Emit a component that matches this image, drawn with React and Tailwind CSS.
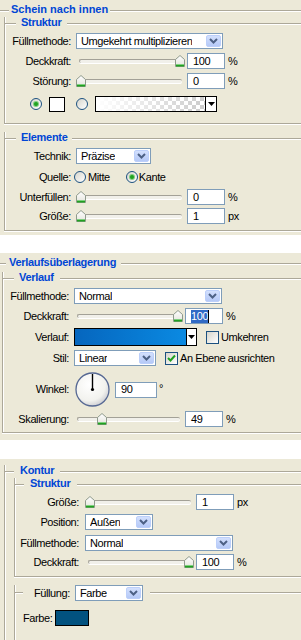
import React from "react";

const Line = ({ className = "" }) => (
  <div className={`h-[2px] border-t border-[#aca899] bg-white ${className}`} />
);

const Header = ({ title, lead, pad, className = "" }) => (
  <div className={`flex items-center h-[14px] ${className}`}>
    <Line className={`shrink-0 ${lead}`} />
    <span
      className={`shrink-0 leading-[13px] pb-[3px] font-bold text-[#0046d5] tracking-[-0.3px] whitespace-nowrap ${pad}`}
    >
      {title}
    </span>
    <Line className="flex-1" />
  </div>
);

const Box = ({ className = "", children }) => (
  <div
    className={`border-l border-b border-[#aca899] shadow-[inset_1px_0_0_#fff,0_1px_0_#fff] ${className}`}
  >
    {children}
  </div>
);

const Chevron = () => (
  <svg width="9" height="6" viewBox="0 0 9 6">
    <path d="M1 1 L4.5 4.5 L8 1" fill="none" stroke="#4d6185" strokeWidth="2" />
  </svg>
);

const Select = ({ value, w }) => (
  <div
    className={`${w} h-[16px] shrink-0 bg-white border border-[#7f9db9] flex items-center justify-between pl-[4px] pr-[1px]`}
  >
    <span className="leading-[13px] whitespace-nowrap overflow-hidden">{value}</span>
    <div className="w-[15px] h-[12px] shrink-0 rounded-[2px] border border-[#bccffa] bg-gradient-to-b from-[#d3e0fd] to-[#b5c9f7] flex items-center justify-center">
      <Chevron />
    </div>
  </div>
);

const Field = ({ value, w = "w-[38px]", children }) => (
  <div
    className={`${w} h-[16px] shrink-0 bg-white border border-[#7f9db9] flex items-center pl-[5px] leading-[13px]`}
  >
    {children || value}
  </div>
);

const Thumb = () => (
  <svg width="10" height="12" viewBox="0 0 10 12">
    <defs>
      <linearGradient id="tg" x1="0" y1="0" x2="0" y2="1">
        <stop offset="0" stopColor="#ffffff" />
        <stop offset="1" stopColor="#e4e4dc" />
      </linearGradient>
    </defs>
    <path d="M0.5 4.5 L5 0.5 L9.5 4.5 L9.5 11.5 L0.5 11.5 Z" fill="url(#tg)" stroke="#8f9a8c" />
    <rect x="1" y="9.5" width="8" height="2" fill="#21a121" />
    <rect x="1" y="9" width="8" height="1" fill="#7fcf7f" />
  </svg>
);

const Slider = ({ pos }) => (
  <div className="relative w-[111px] h-[16px] shrink-0">
    <div className="absolute left-[3px] right-[5px] top-[6px] h-[4px] rounded-[2px] border-t border-l border-[#a3a197] bg-[#f1f0ea] shadow-[0_1px_0_#fff]" />
    <div className="absolute top-[2px] flex" style={{ left: pos }}>
      <Thumb />
    </div>
  </div>
);

const Radio = ({ on, className = "" }) => (
  <div
    className={`w-[12px] h-[12px] shrink-0 rounded-full border border-[#1c5180] bg-gradient-to-br from-[#d6d5cc] to-white flex items-center justify-center ${className}`}
  >
    {on && <div className="w-[4px] h-[4px] rounded-full bg-[#21a121] shadow-[0_0_0_1px_#7fcf7f]" />}
  </div>
);

const Check = ({ on, className = "" }) => (
  <div
    className={`w-[13px] h-[13px] shrink-0 border border-[#1c5180] bg-gradient-to-br from-[#d6d5cc] to-white flex items-center justify-center ${className}`}
  >
    {on && (
      <svg width="9" height="9" viewBox="0 0 9 9">
        <path d="M1 4 L3.5 6.5 L8 1.5" fill="none" stroke="#21a121" strokeWidth="2" />
      </svg>
    )}
  </div>
);

const Label = ({ w, children }) => (
  <div className={`${w} shrink-0 text-right leading-[13px] whitespace-nowrap`}>{children}</div>
);

const Row = ({ label, lw, className = "", h = "h-[16px]", children }) => (
  <div className={`flex items-center ${h} ${className}`}>
    <Label w={lw}>{label}</Label>
    {children}
  </div>
);

const SliderRow = ({ label, lw, gap, pos, value, unit, className = "", selected }) => (
  <Row label={label} lw={lw} className={className}>
    <div className={`flex items-center ${gap}`}>
      <Slider pos={pos} />
      <Field>
        {selected ? (
          <span className="flex items-center">
            <span className="bg-[#316ac5] text-white leading-[13px]">{value}</span>
            <span className="w-[1px] h-[13px] bg-black" />
          </span>
        ) : (
          value
        )}
      </Field>
      <span className="ml-[3px] leading-[13px]">{unit}</span>
    </div>
  </Row>
);

const Arrow = () => (
  <svg width="7" height="4" viewBox="0 0 7 4">
    <path d="M0 0 H7 L3.5 4 Z" fill="#000" />
  </svg>
);

const TransparentPreview = () => (
  <svg width="109" height="14" viewBox="0 0 109 14" className="block">
    <defs>
      <pattern id="chk" width="8" height="8" patternUnits="userSpaceOnUse">
        <rect width="8" height="8" fill="#ffffff" />
        <rect width="4" height="4" fill="#cccccc" />
        <rect x="4" y="4" width="4" height="4" fill="#cccccc" />
      </pattern>
      <linearGradient id="fade" x1="0" y1="0" x2="1" y2="0">
        <stop offset="0" stopColor="#ffffff" stopOpacity="1" />
        <stop offset="1" stopColor="#ffffff" stopOpacity="0" />
      </linearGradient>
    </defs>
    <rect width="109" height="14" fill="url(#chk)" />
    <rect width="109" height="14" fill="url(#fade)" />
  </svg>
);

const Dial = () => (
  <svg width="35" height="35" viewBox="0 0 35 35" className="shrink-0">
    <defs>
      <radialGradient id="dg" cx="0.4" cy="0.35" r="0.7">
        <stop offset="0" stopColor="#ffffff" />
        <stop offset="0.7" stopColor="#f2f2ee" />
        <stop offset="1" stopColor="#c9cad0" />
      </radialGradient>
    </defs>
    <circle cx="17.5" cy="17.5" r="16.5" fill="url(#dg)" stroke="#566893" strokeWidth="1.3" />
    <line x1="17.5" y1="17.5" x2="17.5" y2="2" stroke="#000" strokeWidth="1.4" />
    <circle cx="17.5" cy="17.5" r="1.6" fill="#000" />
  </svg>
);

export default function App() {
  return (
    <div className="w-[301px] h-[640px] overflow-hidden bg-[#ece9d8] text-black text-[11px] tracking-[-0.4px] font-['Liberation_Sans',Arial,sans-serif]">
      {/* Schein nach innen */}
      <div className="flex items-center h-[22px]">
        <Line className="w-[9px] shrink-0" />
        <span className="shrink-0 leading-[13px] pb-[3px] px-[2px] font-bold text-[#0046d5] tracking-[0px] whitespace-nowrap">
          Schein nach innen
        </span>
        <Line className="flex-1" />
      </div>

      <Box className="ml-[4px] mt-[1px] pb-[11px]">
        <Header title="Struktur" lead="w-[11px]" pad="pl-[5px] pr-[6px]" className="-mt-[6px]" />
        <Row label="Füllmethode:" lw="w-[66px]" className="mt-[2px]">
          <Select value="Umgekehrt multiplizieren" w="w-[147px] ml-[5px]" />
        </Row>
        <SliderRow label="Deckkraft:" lw="w-[66px]" gap="ml-[5px]" pos={99} value="100" unit="%" className="mt-[4px]" />
        <SliderRow label="Störung:" lw="w-[66px]" gap="ml-[5px]" pos={0} value="0" unit="%" className="mt-[4px]" />
        <div className="flex items-center h-[16px] mt-[7px]">
          <Radio on className="ml-[25px]" />
          <div className="ml-[7px] w-[16px] h-[15px] bg-white border border-black" />
          <Radio className="ml-[11px]" />
          <div className="ml-[7px] flex h-[16px] border border-black bg-white">
            <TransparentPreview />
            <div className="w-[11px] border-l border-black flex items-center justify-center">
              <Arrow />
            </div>
          </div>
        </div>
      </Box>

      <Box className="ml-[4px] mt-[14px] pb-[6px]">
        <Header title="Elemente" lead="w-[11px]" pad="pl-[5px] pr-[4px]" className="-mt-[6px]" />
        <Row label="Technik:" lw="w-[66px]" className="mt-[2px]">
          <Select value="Präzise" w="w-[75px] ml-[5px]" />
        </Row>
        <Row label="Quelle:" lw="w-[66px]" className="mt-[5px]">
          <Radio className="ml-[3px]" />
          <span className="ml-[2px] leading-[13px]">Mitte</span>
          <Radio on className="ml-[16px]" />
          <span className="ml-[1px] leading-[13px]">Kante</span>
        </Row>
        <SliderRow label="Unterfüllen:" lw="w-[66px]" gap="ml-[5px]" pos={0} value="0" unit="%" className="mt-[4px]" />
        <SliderRow label="Größe:" lw="w-[66px]" gap="ml-[5px]" pos={0} value="1" unit="px" className="mt-[3px]" />
      </Box>

      <div className="mt-[4px] h-[18px] bg-white" />

      {/* Verlaufsüberlagerung */}
      <div className="flex items-center h-[22px]">
        <Line className="w-[6px] shrink-0" />
        <span className="shrink-0 leading-[13px] pb-[3px] pl-[3px] pr-[5px] font-bold text-[#0046d5] tracking-[-0.3px] whitespace-nowrap">
          Verlaufsüberlagerung
        </span>
        <Line className="flex-1" />
      </div>

      <Box className="ml-[2px] mt-[3px] pb-[5px]">
        <Header title="Verlauf" lead="w-[11px]" pad="pl-[5px] pr-[6px]" className="-mt-[6px]" />
        <Row label="Füllmethode:" lw="w-[66px]" className="mt-[2px]">
          <Select value="Normal" w="w-[148px] ml-[5px]" />
        </Row>
        <SliderRow label="Deckkraft:" lw="w-[66px]" gap="ml-[5px]" pos={99} value="100" unit="%" selected className="mt-[4px]" />
        <Row label="Verlauf:" lw="w-[66px]" h="h-[18px]" className="mt-[4px]">
          <div className="ml-[5px] flex h-[18px] border border-black">
            <div className="w-[111px] bg-gradient-to-r from-[#0666be] to-[#0b8ae2]" />
            <div className="w-[10px] bg-white border-l border-black flex items-center justify-center">
              <Arrow />
            </div>
          </div>
          <Check className="ml-[9px]" />
          <span className="ml-[2px] leading-[13px]">Umkehren</span>
        </Row>
        <Row label="Stil:" lw="w-[66px]" className="mt-[4px]">
          <Select value="Linear" w="w-[82px] ml-[5px]" />
          <Check on className="ml-[9px]" />
          <span className="ml-[2px] leading-[13px]">An Ebene ausrichten</span>
        </Row>
        <Row label="Winkel:" lw="w-[66px]" h="h-[35px]" className="mt-[6px]">
          <div className="ml-[6px] flex items-center">
            <Dial />
            <Field value="90" w="w-[42px] ml-[5px]" />
            <span className="ml-[2px] self-start leading-[13px] mt-[10px]">°</span>
          </div>
        </Row>
        <SliderRow label="Skalierung:" lw="w-[66px]" gap="ml-[5px]" pos={23} value="49" unit="%" className="mt-[4px]" />
      </Box>

      <div className="mt-[7px] h-[19px] bg-white" />

      {/* Kontur */}
      <Box className="ml-[4px] mt-[12px] shadow-[inset_1px_0_0_#fff]">
        <Header title="Kontur" lead="w-[9px]" pad="pl-[6px] pr-[6px]" className="-mt-[6px]" />
        <Box className="ml-[9px] mt-[5px] pb-[6px]">
          <Header title="Struktur" lead="w-[9px]" pad="pl-[6px] pr-[7px]" className="-mt-[6px]" />
          <SliderRow label="Größe:" lw="w-[64px]" gap="ml-[6px]" pos={0} value="1" unit="px" className="mt-[2px]" />
          <Row label="Position:" lw="w-[64px]" className="mt-[4px]">
            <Select value="Außen" w="w-[68px] ml-[6px]" />
          </Row>
          <Row label="Füllmethode:" lw="w-[64px]" className="mt-[5px]">
            <Select value="Normal" w="w-[148px] ml-[6px]" />
          </Row>
          <SliderRow label="Deckkraft:" lw="w-[64px]" gap="ml-[6px]" pos={99} value="100" unit="%" className="mt-[3px]" />
        </Box>
        <div className="ml-[9px] mt-[15px] border-l border-[#aca899] shadow-[inset_1px_0_0_#fff] pb-[20px]">
          <div className="flex items-center h-[16px] -mt-[7px]">
            <Line className="w-[8px] shrink-0" />
            <span className="ml-[11px] leading-[13px]">Füllung:</span>
            <Select value="Farbe" w="w-[68px] ml-[5px]" />
            <Line className="flex-1 ml-[7px]" />
          </div>
          <div className="flex items-center h-[16px] mt-[9px]">
            <span className="ml-[8px] leading-[13px]">Farbe:</span>
            <div className="ml-[3px] w-[34px] h-[16px] bg-[#02527f] border border-black" />
          </div>
        </div>
      </Box>
    </div>
  );
}
